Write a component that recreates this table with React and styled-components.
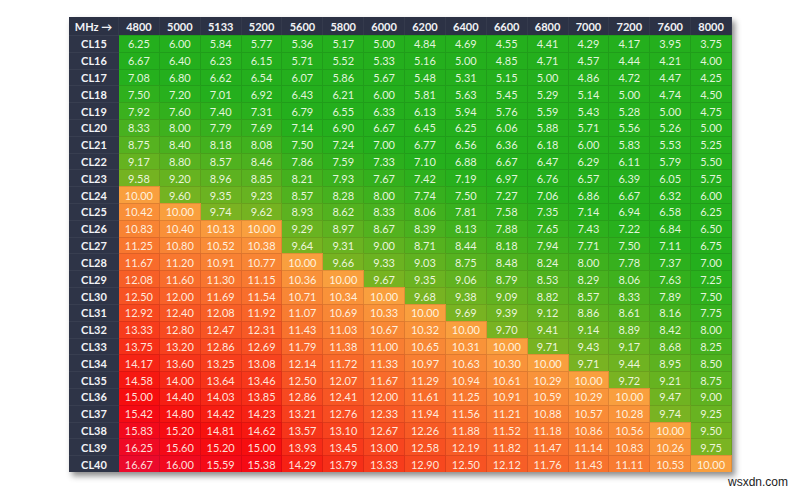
import React from "react";
import styled, { createGlobalStyle } from "styled-components";

const GlobalStyle = createGlobalStyle`
  html, body { margin: 0; padding: 0; background: #ffffff; }
  body { font-family: "Lato", "Open Sans", "DejaVu Sans", sans-serif; }
`;

const FREQS = [4800, 5000, 5133, 5200, 5600, 5800, 6000, 6200, 6400, 6600, 6800, 7000, 7200, 7600, 8000];
const CLS = Array.from({ length: 26 }, (_, i) => 15 + i);

function cellColor(v) {
  if (v >= 10) {
    const t = Math.min(1, Math.max(0, (v - 10) / 6.67));
    const e = Math.pow(t, 0.85);
    const h = 31 - e * 40;
    const s = 94 - e * 2;
    const l = 61 - e * 13;
    return `hsl(${h}, ${s}%, ${l}%)`;
  }
  const t = Math.pow(Math.min(1, Math.max(0, (v - 7) / 3)), 1.2);
  const h = 117 - t * 37;
  const s = 72 - t * 4;
  const l = 40 + t * 2;
  return `hsl(${h}, ${s}%, ${l}%)`;
}

const Page = styled.div`
  width: 800px;
  height: 493px;
  display: flex;
  flex-direction: column;
  padding: 17px 0 0 69px;
  box-sizing: border-box;
  overflow: hidden;
`;

const Table = styled.div`
  width: 663px;
  height: 455px;
  display: grid;
  grid-template-columns: 50px repeat(15, 1fr);
  grid-template-rows: 18px repeat(26, 1fr);
  box-shadow: 3px 4px 6px rgba(0, 0, 0, 0.45);
  background: #2d3346;
`;

const HeadCell = styled.div`
  background: #2c3245;
  color: #f2f3f6;
  font-weight: 700;
  font-size: 11px;
  display: flex;
  align-items: center;
  justify-content: center;
  white-space: nowrap;
  border-right: 1px solid rgba(255, 255, 255, 0.04);
`;

const LabelCell = styled.div`
  background: #2e3447;
  color: #f2f3f6;
  font-weight: 700;
  font-size: 11px;
  display: flex;
  align-items: center;
  justify-content: center;
  border-top: 1px solid rgba(255, 255, 255, 0.05);
`;

const DataCell = styled.div`
  background: ${(p) => p.$bg};
  color: rgba(255, 255, 245, 0.88);
  font-size: 11px;
  display: flex;
  align-items: center;
  justify-content: center;
  border-right: 1px solid rgba(0, 0, 0, 0.1);
  border-top: 1px solid rgba(0, 0, 0, 0.1);
`;

const Footer = styled.div`
  width: 719px;
  display: flex;
  justify-content: flex-end;
  margin-top: 3px;
  font-family: "Liberation Sans", Arial, sans-serif;
  font-size: 12px;
  color: #1c1c1c;
`;

export default function App() {
  return (
    <>
      <GlobalStyle />
      <Page>
        <Table>
          <HeadCell>MHz →</HeadCell>
          {FREQS.map((f) => (
            <HeadCell key={f}>{f}</HeadCell>
          ))}
          {CLS.map((cl) => (
            <React.Fragment key={cl}>
              <LabelCell>CL{cl}</LabelCell>
              {FREQS.map((f) => {
                const v = (cl * 2000) / f;
                return (
                  <DataCell key={f} $bg={cellColor(v)}>
                    {v.toFixed(2)}
                  </DataCell>
                );
              })}
            </React.Fragment>
          ))}
        </Table>
        <Footer>wsxdn.com</Footer>
      </Page>
    </>
  );
}
